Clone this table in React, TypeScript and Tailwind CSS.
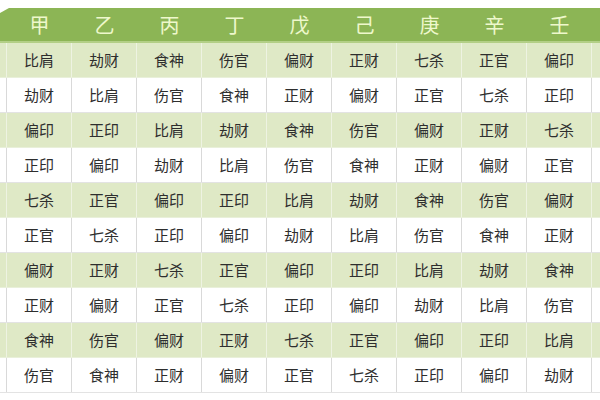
const stems = ['甲', '乙', '丙', '丁', '戊', '己', '庚', '辛', '壬'];

const rows: string[][] = [
  ['比肩', '劫财', '食神', '伤官', '偏财', '正财', '七杀', '正官', '偏印'],
  ['劫财', '比肩', '伤官', '食神', '正财', '偏财', '正官', '七杀', '正印'],
  ['偏印', '正印', '比肩', '劫财', '食神', '伤官', '偏财', '正财', '七杀'],
  ['正印', '偏印', '劫财', '比肩', '伤官', '食神', '正财', '偏财', '正官'],
  ['七杀', '正官', '偏印', '正印', '比肩', '劫财', '食神', '伤官', '偏财'],
  ['正官', '七杀', '正印', '偏印', '劫财', '比肩', '伤官', '食神', '正财'],
  ['偏财', '正财', '七杀', '正官', '偏印', '正印', '比肩', '劫财', '食神'],
  ['正财', '偏财', '正官', '七杀', '正印', '偏印', '劫财', '比肩', '伤官'],
  ['食神', '伤官', '偏财', '正财', '七杀', '正官', '偏印', '正印', '比肩'],
  ['伤官', '食神', '正财', '偏财', '正官', '七杀', '正印', '偏印', '劫财'],
];

export default function App() {
  return (
    <div
      className="h-[400px] w-[600px] overflow-hidden bg-white pt-[8px]"
      style={{ fontFamily: '"Noto Sans CJK SC", "Noto Sans", sans-serif' }}
    >
      {/* 表头：天干，右侧一列被裁掉只露出边缘 */}
      <div className="flex h-[33px] w-[600px] items-center bg-[#8cb555] [clip-path:polygon(9px_0,100%_0,100%_100%,0_100%,0_5px)]">
        <div className="w-[7px] shrink-0" />
        {stems.map((s) => (
          <div
            key={s}
            className="flex w-[65px] shrink-0 items-center justify-center text-[20px] leading-none text-[#eef8cc]"
          >
            {s}
          </div>
        ))}
      </div>
      <div className="h-[2px] w-[600px] bg-[#b3cf86]" />

      {rows.map((r, i) => {
        const green = i % 2 === 0;
        const line = green ? 'border-[#eef3e2]' : 'border-[#d9d9d9]';
        return (
          <div
            key={i}
            className={`flex h-[35px] w-[600px] border-b ${
              green ? 'border-[#e9f0da] bg-[#dfe9c6]' : 'border-[#e3e3e3] bg-white'
            }`}
          >
            <div className={`w-[7px] shrink-0 border-r ${line}`} />
            {r.map((c, j) => (
              <div
                key={j}
                className={`flex w-[65px] shrink-0 items-center justify-center border-r text-[15px] text-[#2e2e2e] ${line}`}
              >
                {c}
              </div>
            ))}
            <div className="flex-1" />
          </div>
        );
      })}
    </div>
  );
}
